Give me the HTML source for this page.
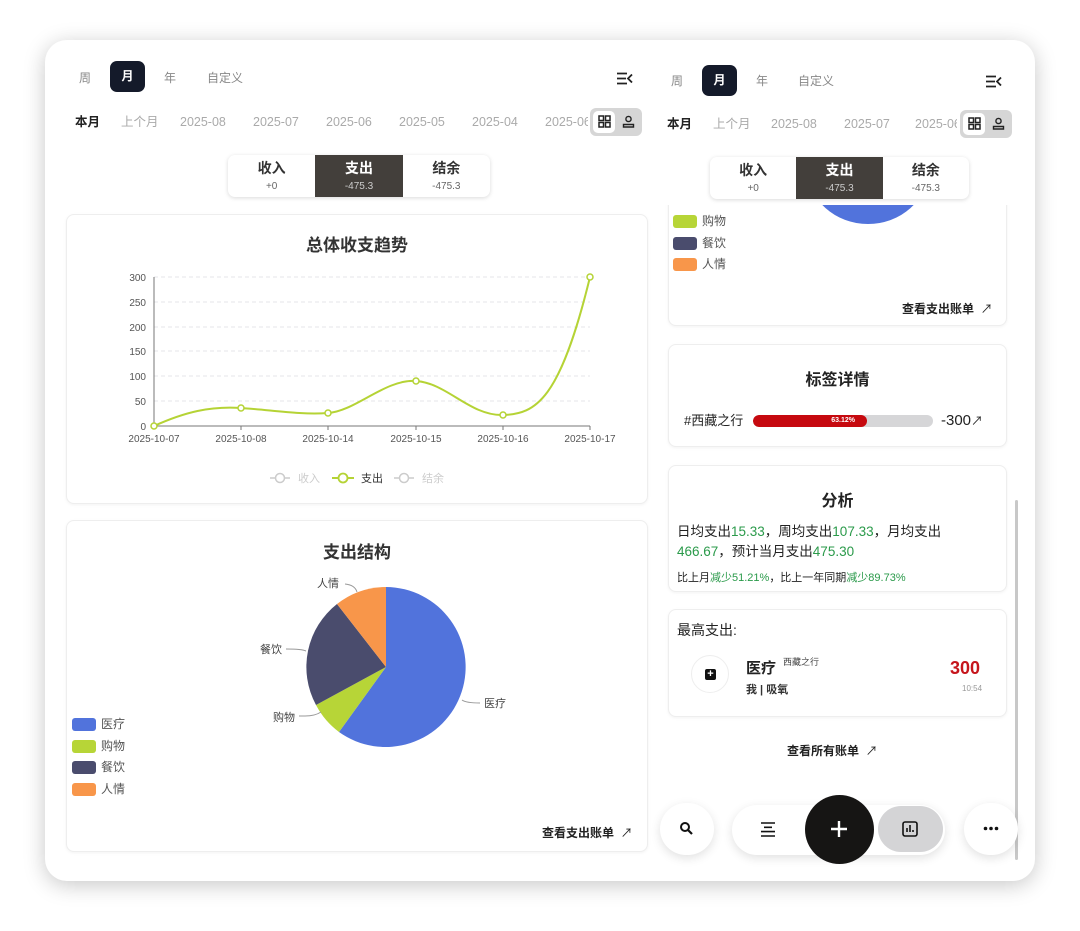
<!DOCTYPE html>
<html><head><meta charset="utf-8"><style>
*{box-sizing:border-box;margin:0;padding:0}
body{width:1080px;height:931px;background:#fff;position:relative;overflow:hidden;font-family:"Liberation Sans","Noto Sans CJK SC",sans-serif;color:#222}
.a{position:absolute}
.outer{left:45px;top:40px;width:990px;height:841px;border-radius:22px;background:#fff;box-shadow:0 4px 22px rgba(0,0,0,.22)}
.tab{font-size:12px;color:#888}
.sel{background:#141a2a;color:#fff;border-radius:7px;width:35px;height:31px;text-align:center;line-height:31px;font-size:12px;font-weight:bold}
.d{font-size:12.5px;color:#aaa;line-height:16px;height:16px}
.seg{border-radius:7px;background:#fff;box-shadow:0 1px 4px rgba(0,0,0,.15);display:flex;overflow:hidden}
.seg div{flex:1;text-align:center;padding-top:6px;font-size:14px;font-weight:bold;color:#333;line-height:15px}
.seg div span{display:block;font-size:10px;font-weight:normal;color:#666;margin-top:3px}
.seg .on{background:#433f3b;color:#fff}.seg .on span{color:#ccc}
.card{background:#fff;border:1px solid #eee;border-radius:8px;box-shadow:0 1px 3px rgba(0,0,0,.05)}
.tg{width:52px;height:28px;background:#d6d6d6;border-radius:6px}
.lg{width:24px;height:13px;border-radius:3px;display:inline-block;vertical-align:middle;margin-right:5px}
.lgt{font-size:12px;color:#555;height:21.5px}
.g{color:#2a9a4a}
.nav{background:#fff;border-radius:30px;box-shadow:0 3px 10px rgba(0,0,0,.12)}
</style></head><body>
<div class="a outer"></div>

<!-- LEFT PANE -->
<div class="a tab" style="left:79px;top:69px">周</div>
<div class="a sel" style="left:110px;top:61px">月</div>
<div class="a tab" style="left:164px;top:69px">年</div>
<div class="a tab" style="left:207px;top:69px">自定义</div>
<svg class="a" style="left:616px;top:72px" width="18" height="13" viewBox="0 0 18 13"><path d="M1 1.5h10M1 6.5h9M1 11.5h10M16 2.5l-4 4 4 4" stroke="#222" stroke-width="1.8" fill="none"/></svg>
<div class="a d" style="left:75px;top:114px;font-weight:bold;color:#222">本月</div>
<div class="a d" style="left:121px;top:114px">上个月</div>
<div class="a d" style="left:180px;top:114px">2025-08</div>
<div class="a d" style="left:253px;top:114px">2025-07</div>
<div class="a d" style="left:326px;top:114px">2025-06</div>
<div class="a d" style="left:399px;top:114px">2025-05</div>
<div class="a d" style="left:472px;top:114px">2025-04</div>
<div class="a d" style="left:545px;top:114px;width:43px;overflow:hidden;white-space:nowrap">2025-06</div>
<div class="a tg" style="left:590px;top:108px"><div class="a" style="left:3px;top:3px;width:22px;height:22px;background:#fff;border-radius:5px"></div>
<svg class="a" style="left:8px;top:7px" width="13" height="13"><rect x="1" y="1" width="4.5" height="4.5" stroke="#222" fill="none" stroke-width="1.5"/><rect x="7.5" y="1" width="4.5" height="4.5" stroke="#222" fill="none" stroke-width="1.5"/><rect x="1" y="7.5" width="4.5" height="4.5" stroke="#222" fill="none" stroke-width="1.5"/><rect x="7.5" y="7.5" width="4.5" height="4.5" stroke="#222" fill="none" stroke-width="1.5"/></svg>
<svg class="a" style="left:32px;top:7px" width="13" height="13"><circle cx="6.5" cy="4" r="2.6" stroke="#222" fill="none" stroke-width="1.4"/><path d="M1.5 12v-2.5h10V12z" stroke="#222" fill="none" stroke-width="1.4"/></svg></div>
<div class="a seg" style="left:228px;top:155px;width:262px;height:42px"><div>收入<span>+0</span></div><div class="on">支出<span>-475.3</span></div><div>结余<span>-475.3</span></div></div>

<div class="a card" style="left:66px;top:214px;width:582px;height:290px"></div>
<div class="a" style="left:66px;top:231px;width:582px;text-align:center;font-size:17px;font-weight:bold;color:#333">总体收支趋势</div>
<svg class="a" style="left:66px;top:214px" width="582" height="290" viewBox="66 214 582 290">
<g stroke="#e4e4e8" stroke-dasharray="4 3"><line x1="154" y1="277" x2="590" y2="277"/><line x1="154" y1="302" x2="590" y2="302"/><line x1="154" y1="327" x2="590" y2="327"/><line x1="154" y1="351" x2="590" y2="351"/><line x1="154" y1="376" x2="590" y2="376"/><line x1="154" y1="401" x2="590" y2="401"/></g>
<line x1="154" y1="277" x2="154" y2="426" stroke="#777"/><line x1="154" y1="426" x2="590" y2="426" stroke="#777"/>
<g stroke="#777"><line x1="241" y1="426" x2="241" y2="430"/><line x1="328" y1="426" x2="328" y2="430"/><line x1="416" y1="426" x2="416" y2="430"/><line x1="503" y1="426" x2="503" y2="430"/><line x1="590" y1="426" x2="590" y2="430"/></g>
<g font-size="10" fill="#555" text-anchor="end"><text x="146" y="281">300</text><text x="146" y="306">250</text><text x="146" y="331">200</text><text x="146" y="355">150</text><text x="146" y="380">100</text><text x="146" y="405">50</text><text x="146" y="430">0</text></g>
<g font-size="10" fill="#555" text-anchor="middle"><text x="154" y="442">2025-10-07</text><text x="241" y="442">2025-10-08</text><text x="328" y="442">2025-10-14</text><text x="416" y="442">2025-10-15</text><text x="503" y="442">2025-10-16</text><text x="590" y="442">2025-10-17</text></g>
<path d="M154 426C185 412 210 406 241 408S300 415 328 413S385 379 416 381S470 416 503 415S560 400 590 277" stroke="#b5d335" stroke-width="2" fill="none"/>
<g fill="#fff" stroke="#b5d335" stroke-width="1.5"><circle cx="154" cy="426" r="3"/><circle cx="241" cy="408" r="3"/><circle cx="328" cy="413" r="3"/><circle cx="416" cy="381" r="3"/><circle cx="503" cy="415" r="3"/><circle cx="590" cy="277" r="3"/></g>
<g font-size="11"><path d="M270 478h20" stroke="#ccc" stroke-width="1.5"/><circle cx="280" cy="478" r="4.5" fill="#fff" stroke="#ccc" stroke-width="1.5"/><text x="298" y="482" fill="#ccc">收入</text>
<path d="M332 478h22" stroke="#b5d335" stroke-width="2"/><circle cx="343" cy="478" r="4.5" fill="#fff" stroke="#b5d335" stroke-width="1.8"/><text x="361" y="482" fill="#333">支出</text>
<path d="M394 478h20" stroke="#ccc" stroke-width="1.5"/><circle cx="404" cy="478" r="4.5" fill="#fff" stroke="#ccc" stroke-width="1.5"/><text x="422" y="482" fill="#ccc">结余</text></g>
</svg>

<div class="a card" style="left:66px;top:520px;width:582px;height:332px"></div>
<div class="a" style="left:66px;top:538px;width:582px;text-align:center;font-size:17px;font-weight:bold;color:#333">支出结构</div>
<svg class="a" style="left:66px;top:520px" width="582" height="332" viewBox="66 520 582 332">
<path d="M386 667L386 587A80 80 0 1 1 339 732Z" fill="#5173dc"/>
<path d="M386 667L339 732A80 80 0 0 1 316 705Z" fill="#b7d537"/>
<path d="M386 667L316 705A80 80 0 0 1 337 604Z" fill="#4a4c6d"/>
<path d="M386 667L337 604A80 80 0 0 1 386 587Z" fill="#f8964a"/>
<g stroke="#999" fill="none"><path d="M462 700q4 3 18 3"/><path d="M321 712q-6 4-16 4h-6"/><path d="M306 651q-4-2-20-2"/><path d="M357 592q-2-7-12-8"/></g>
<g font-size="11" fill="#444"><text x="484" y="707">医疗</text><text x="273" y="721">购物</text><text x="260" y="653">餐饮</text><text x="317" y="587">人情</text></g>
</svg>
<div class="a" style="left:72px;top:715px">
<div class="lgt"><span class="lg" style="background:#5173dc"></span>医疗</div>
<div class="lgt"><span class="lg" style="background:#b7d537"></span>购物</div>
<div class="lgt"><span class="lg" style="background:#4a4c6d"></span>餐饮</div>
<div class="lgt"><span class="lg" style="background:#f8964a"></span>人情</div></div>
<div class="a" style="left:542px;top:824px;font-size:12px;font-weight:bold">查看支出账单 &nbsp;<span style="font-weight:normal">↗</span></div>

<!-- RIGHT PANE -->
<div class="a card" style="left:668px;top:180px;width:339px;height:146px"></div>
<div class="a" style="left:808px;top:170px;width:120px;height:54px;background:#5173dc;border-radius:0 0 60px 60px/0 0 54px 54px"></div>
<div class="a" style="left:673px;top:212px">
<div class="lgt"><span class="lg" style="background:#b7d537"></span>购物</div>
<div class="lgt"><span class="lg" style="background:#4a4c6d"></span>餐饮</div>
<div class="lgt"><span class="lg" style="background:#f8964a"></span>人情</div></div>
<div class="a" style="left:902px;top:300px;font-size:12px;font-weight:bold">查看支出账单 &nbsp;<span style="font-weight:normal">↗</span></div>
<div class="a" style="left:650px;top:45px;width:380px;height:160px;background:#fff;border-radius:0 20px 0 0"></div>
<div class="a tab" style="left:671px;top:72px">周</div>
<div class="a sel" style="left:702px;top:65px">月</div>
<div class="a tab" style="left:756px;top:72px">年</div>
<div class="a tab" style="left:798px;top:72px">自定义</div>
<svg class="a" style="left:985px;top:75px" width="18" height="13" viewBox="0 0 18 13"><path d="M1 1.5h10M1 6.5h9M1 11.5h10M16 2.5l-4 4 4 4" stroke="#222" stroke-width="1.8" fill="none"/></svg>
<div class="a d" style="left:667px;top:116px;font-weight:bold;color:#222">本月</div>
<div class="a d" style="left:713px;top:116px">上个月</div>
<div class="a d" style="left:771px;top:116px">2025-08</div>
<div class="a d" style="left:844px;top:116px">2025-07</div>
<div class="a d" style="left:915px;top:116px;width:42px;overflow:hidden;white-space:nowrap">2025-06</div>
<div class="a tg" style="left:960px;top:110px"><div class="a" style="left:3px;top:3px;width:22px;height:22px;background:#fff;border-radius:5px"></div>
<svg class="a" style="left:8px;top:7px" width="13" height="13"><rect x="1" y="1" width="4.5" height="4.5" stroke="#222" fill="none" stroke-width="1.5"/><rect x="7.5" y="1" width="4.5" height="4.5" stroke="#222" fill="none" stroke-width="1.5"/><rect x="1" y="7.5" width="4.5" height="4.5" stroke="#222" fill="none" stroke-width="1.5"/><rect x="7.5" y="7.5" width="4.5" height="4.5" stroke="#222" fill="none" stroke-width="1.5"/></svg>
<svg class="a" style="left:32px;top:7px" width="13" height="13"><circle cx="6.5" cy="4" r="2.6" stroke="#222" fill="none" stroke-width="1.4"/><path d="M1.5 12v-2.5h10V12z" stroke="#222" fill="none" stroke-width="1.4"/></svg></div>
<div class="a seg" style="left:710px;top:157px;width:259px;height:42px"><div>收入<span>+0</span></div><div class="on">支出<span>-475.3</span></div><div>结余<span>-475.3</span></div></div>

<div class="a card" style="left:668px;top:344px;width:339px;height:103px"></div>
<div class="a" style="left:668px;top:366px;width:339px;text-align:center;font-size:16px;font-weight:bold">标签详情</div>
<div class="a" style="left:684px;top:412px;font-size:13px;line-height:18px">#西藏之行</div>
<div class="a" style="left:753px;top:415px;width:180px;height:12px;background:#d6d6d8;border-radius:6px;overflow:hidden"><div style="width:114px;height:12px;background:#c6090f;border-radius:6px;color:#fff;font-size:7px;line-height:12px;text-align:right;padding-right:12px;font-weight:bold">63.12%</div></div>
<div class="a" style="left:941px;top:412px;font-size:15px;line-height:18px">-300<span style="font-size:12px">↗</span></div>

<div class="a card" style="left:668px;top:465px;width:339px;height:127px"></div>
<div class="a" style="left:668px;top:487px;width:339px;text-align:center;font-size:16px;font-weight:bold">分析</div>
<div class="a" style="left:677px;top:522px;font-size:13.5px;line-height:20px;width:300px">日均支出<span class="g">15.33</span>，周均支出<span class="g">107.33</span>，月均支出<br><span class="g">466.67</span>，预计当月支出<span class="g">475.30</span></div>
<div class="a" style="left:677px;top:569px;font-size:11px">比上月<span class="g">减少51.21%</span>，比上一年同期<span class="g">减少89.73%</span></div>

<div class="a card" style="left:668px;top:609px;width:339px;height:108px"></div>
<div class="a" style="left:677px;top:620px;font-size:14px">最高支出:</div>
<div class="a" style="left:691px;top:655px;width:38px;height:38px;border-radius:50%;border:1px solid #eee"></div>
<div class="a" style="left:705px;top:669px;width:11px;height:11px;background:#111;border-radius:2px;color:#fff;font-size:11px;line-height:11px;text-align:center;font-weight:bold">+</div>
<div class="a" style="left:746px;top:657px;font-size:15px;font-weight:bold">医疗</div>
<div class="a" style="left:783px;top:655px;font-size:9px;color:#444">西藏之行</div>
<div class="a" style="left:746px;top:681px;font-size:11px;font-weight:bold;color:#333">我 | 吸氧</div>
<div class="a" style="left:950px;top:658px;font-size:18px;font-weight:bold;color:#c6151c">300</div>
<div class="a" style="left:962px;top:684px;font-size:8px;color:#999">10:54</div>

<div class="a" style="left:787px;top:742px;font-size:12px;font-weight:bold">查看所有账单 &nbsp;<span style="font-weight:normal">↗</span></div>
<div class="a" style="left:1015px;top:500px;width:3px;height:360px;background:#c8c8c8;border-radius:2px"></div>

<div class="a nav" style="left:660px;top:803px;width:54px;height:52px"></div>
<svg class="a" style="left:679px;top:821px" width="16" height="16"><circle cx="6" cy="6" r="4" stroke="#111" stroke-width="2" fill="none"/><path d="M9 9l4 4" stroke="#111" stroke-width="2.2"/></svg>
<div class="a nav" style="left:732px;top:805px;width:213px;height:50px"></div>
<svg class="a" style="left:760px;top:822px" width="16" height="15"><path d="M1 1h14M4 5.3h8M1 9.6h14M1 14h14" stroke="#111" stroke-width="1.6"/></svg>
<div class="a" style="left:878px;top:806px;width:65px;height:46px;background:#d4d4d6;border-radius:23px"></div>
<svg class="a" style="left:902px;top:821px" width="16" height="16"><rect x="1" y="1" width="14" height="14" rx="2" stroke="#111" stroke-width="1.6" fill="none"/><path d="M5 11V7M8 11V4M11 11V9" stroke="#111" stroke-width="1.6"/></svg>
<div class="a" style="left:805px;top:795px;width:69px;height:69px;background:#161514;border-radius:50%"></div>
<svg class="a" style="left:829px;top:819px" width="20" height="20"><path d="M10 2v16M2 10h16" stroke="#fff" stroke-width="2.4"/></svg>
<div class="a nav" style="left:964px;top:803px;width:54px;height:52px"></div>
<svg class="a" style="left:983px;top:826px" width="16" height="5"><circle cx="2.5" cy="2.5" r="1.8" fill="#111"/><circle cx="8" cy="2.5" r="1.8" fill="#111"/><circle cx="13.5" cy="2.5" r="1.8" fill="#111"/></svg>
</body></html>
